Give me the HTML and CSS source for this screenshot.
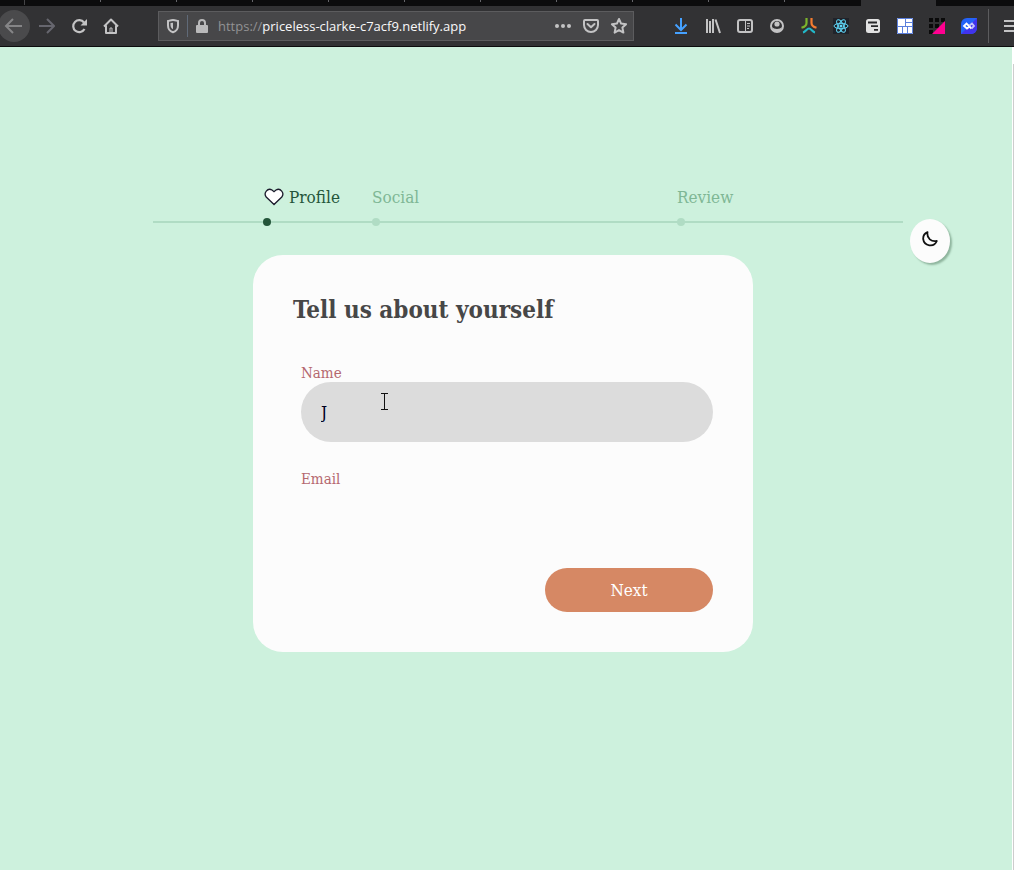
FILE: index.html
```html
<!DOCTYPE html>
<html lang="en">
<head>
<meta charset="utf-8">
<title>Tell us about yourself</title>
<link rel="stylesheet" href="styles.css">
</head>
<body>
<header class="browser">
  <div class="tabs">
    <span class="tab tab-first"></span><span class="tab"></span><span class="tab"></span><span class="tab"></span><span class="tab"></span><span class="tab"></span><span class="tab"></span><span class="tab"></span><span class="tab"></span><span class="tab"></span><span class="tab"></span><span class="tab tab-last"></span><span class="tab tab-active"></span>
  </div>
  <div class="toolbar">
    <div class="nav-buttons">
      <button class="tool back" aria-label="Back"><svg width="32" height="32" viewBox="0 0 32 32" fill="none" stroke="#858587" stroke-width="2"><path d="M24 16H9M15 9l-7 7 7 7"/></svg></button>
      <button class="tool" aria-label="Forward"><svg width="16" height="16" viewBox="0 0 16 16" fill="none" stroke="#66666e" stroke-width="2"><path d="M0 8h15M8 1l7 7-7 7"/></svg></button>
      <button class="tool" aria-label="Reload"><svg width="16" height="16" viewBox="0 0 16 16" fill="none" stroke="#c3c3c4" stroke-width="2.200"><path d="M13 4.500A6 6 0 1 0 13.500 11"/><path d="M16 1v6.500H9.500z" fill="#c3c3c4" stroke="none"/></svg></button>
      <button class="tool" aria-label="Home"><svg width="16" height="16" viewBox="0 0 16 16" fill="none" stroke="#c3c3c4" stroke-width="2" stroke-linejoin="round"><path d="M1 8.500l7-7 7 7M3 7.500V15h10V7.500"/><path d="M7 15v-5h2v5" stroke-width="1"/></svg></button>
    </div>
    <div class="url-bar">
      <svg width="14" height="16" viewBox="0 0 14 16" fill="none" stroke="#c3c3c4" stroke-width="2"><path d="M7 2C5.500 2 3.500 2.600 2 3v4.500c0 3.300 2 5.800 5 6.800 3-1 5-3.500 5-6.800V3C10.500 2.600 8.500 2 7 2z"/><path d="M7 4.800v6.500C5.300 10.300 4.500 9 4.500 7V5z" fill="#c3c3c4" stroke="none"/></svg>
      <span class="url-divider"></span>
      <svg class="lock" width="12" height="16" viewBox="0 0 12 16"><path d="M3 8V5a3 3 0 0 1 6 0v3" fill="none" stroke="#b9b9ba" stroke-width="2"/><rect y="7" width="12" height="8" rx="1" fill="#b9b9ba"/></svg>
      <p class="url"><span class="scheme">https://</span>priceless-clarke-c7acf9.netlify.app</p>
      <div class="url-actions">
        <svg width="18" height="16" viewBox="0 0 18 16" fill="#c3c3c4"><circle cx="3" cy="8" r="2"/><circle cx="9" cy="8" r="2"/><circle cx="15" cy="8" r="2"/></svg>
        <svg width="16" height="16" viewBox="0 0 16 16" fill="none" stroke="#c3c3c4" stroke-width="2" stroke-linejoin="round"><path d="M2 2h12a1 1 0 0 1 1 1v4a7 7 0 0 1-14 0V3a1 1 0 0 1 1-1z"/><path d="M4.500 6L8 9.300 11.500 6" stroke-linecap="round"/></svg>
        <svg width="18" height="18" viewBox="0 0 18 18" fill="none" stroke="#c3c3c4" stroke-width="2" stroke-linejoin="round"><path d="M9 2l2.100 4.600 5 .6-3.700 3.400 1 5L9 13.100l-4.400 2.500 1-5L1.900 7.200l5-.6z"/></svg>
      </div>
    </div>
    <div class="extensions">
      <button class="tool" aria-label="Downloads"><svg width="14" height="16" viewBox="0 0 14 16" fill="none" stroke="#45a1ff" stroke-width="2"><path d="M7 0v11M1.500 6.500L7 12l5.500-5.500M1 15h12"/></svg></button>
      <button class="tool" aria-label="Library"><svg width="16" height="16" viewBox="0 0 16 16" fill="none" stroke="#c3c3c4" stroke-width="2"><path d="M2 1v14M5 3v12M8 1v14M10.500 1.500l4.500 13.500"/></svg></button>
      <button class="tool" aria-label="Sidebar"><svg width="16" height="16" viewBox="0 0 16 16" fill="none" stroke="#c3c3c4" stroke-width="2"><rect x="1" y="2" width="14" height="12" rx="2"/><path d="M8.500 2v12M10 5.500h3M10 8h3M10 10.500h2" stroke-width="1"/></svg></button>
      <button class="tool" aria-label="Account"><svg width="16" height="16" viewBox="0 0 16 16"><circle cx="8" cy="8" r="6" fill="none" stroke="#c3c3c4" stroke-width="2"/><circle cx="8" cy="6" r="2.600" fill="#c3c3c4"/><path d="M3 9c2 2.500 8 2.500 10 0-.5 3-2.500 5-5 5S3.500 12 3 9z" fill="#c3c3c4"/></svg></button>
      <button class="tool" aria-label="Extension one"><svg width="16" height="16" viewBox="0 0 16 16" fill="none" stroke-width="2.200"><path d="M5.500 0v5c0 2-2 4-5 4.800" stroke="#7cb52c"/><path d="M10.500 0v5c0 2 2 4 5 4.800" stroke="#f47c30"/><path d="M2 14.500c2.500-.5 4-4 6-4s3.500 3.500 6 4" stroke="#22b8c8"/></svg></button>
      <button class="tool" aria-label="React developer tools"><svg width="16" height="16" viewBox="0 0 16 16"><path d="M0 0h16v16H0z" fill="#20232a"/><g fill="none" stroke="#61dafb"><ellipse cx="8" cy="8" rx="7" ry="2.700"/><ellipse cx="8" cy="8" rx="7" ry="2.700" transform="rotate(60 8 8)"/><ellipse cx="8" cy="8" rx="7" ry="2.700" transform="rotate(120 8 8)"/></g><circle cx="8" cy="8" r="1.500" fill="#61dafb"/></svg></button>
      <button class="tool" aria-label="Extension two"><svg width="16" height="16" viewBox="0 0 16 16"><rect x="1" y="1" width="14" height="14" rx="2.500" fill="#e2e2e2"/><path d="M3 4.500h9M6 8.200h7M9 11.800h4" stroke="#28282a" stroke-width="1.800" fill="none"/></svg></button>
      <button class="tool" aria-label="Extension three"><svg width="16" height="16" viewBox="0 0 16 16"><path d="M0 0h16v16H0z" fill="#fff"/><path d="M.5.5h15v15H.5zM8.500 0v8M8 4.500h8M0 8.500h16M5.500 8.500V16M10.500 8.500V16" fill="none" stroke="#5b7fdc"/></svg></button>
      <button class="tool" aria-label="Extension four"><svg width="16" height="16" viewBox="0 0 16 16"><path d="M0 0h4v4H0zM6 0h4v4H6zM12 0h4v4h-4zM0 6h4v4H0zM6 6h4v4H6zM0 12h4v4H0z" fill="#0a0a0a"/><path d="M16 3v13H3z" fill="#ff0090"/></svg></button>
      <button class="tool" aria-label="Extension five"><svg width="16" height="16" viewBox="0 0 16 16"><path d="M6 0h10v10a6 6 0 0 1-6 6H0V6a6 6 0 0 1 6-6z" fill="#2463f7"/><path d="M0 16L16 0v10a6 6 0 0 1-6 6z" fill="#4133ec"/><path d="M8 9l-2 1.500L3 8l2.500-2.500L10.500 10.500" fill="none" stroke="#fff" stroke-width="1.800"/><path d="M10.500 10.500L13 8l-2-2.500L8.500 7.500" fill="none" stroke="#c5c4fa" stroke-width="1.800"/></svg></button>
      <span class="tool-divider"></span>
      <button class="menu" aria-label="Menu"><svg width="16" height="14" viewBox="0 0 16 14" stroke="#c3c3c4" stroke-width="2"><path d="M0 2h16M0 7h16M0 12h16"/></svg></button>
    </div>
  </div>
</header>
<div class="viewport">
  <main class="page">
    <ol class="steps">
      <li class="step step-current"><span class="step-label"><svg width="20" height="18" viewBox="0 0 20 18"><path d="M10 16.500L2.200 9C-.8 5 3.500-.5 8 2L10 3.700 12 2C16.500-.5 20.800 5 17.800 9z" fill="#fff" stroke="#1b1b2c" stroke-width="1.300"/></svg>Profile</span><span class="dot"></span></li>
      <li class="step step-social"><span class="step-label">Social</span><span class="dot"></span></li>
      <li class="step"><span class="step-label">Review</span><span class="dot"></span></li>
    </ol>
    <form class="card">
      <h1 class="title">Tell us about yourself</h1>
      <div class="field">
        <label class="label" for="name">Name</label>
        <input class="input input-active" id="name" type="text" value="J">
        <svg class="pointer" width="9" height="17" viewBox="0 0 9 17" fill="none" stroke="#111"><path d="M1 .5h7M4.500 .5v16M1 16.500h7"/></svg>
      </div>
      <div class="field">
        <label class="label" for="email">Email</label>
        <input class="input" id="email" type="email">
      </div>
      <button class="next" type="button">Next</button>
    </form>
    <button class="theme" aria-label="Dark mode"><svg width="16" height="16" viewBox="0 0 16 16" fill="none" stroke="#111" stroke-width="1.800" stroke-linejoin="round"><path d="M5.500 1.200C2.500 2.500 1 5 1.200 8.200 2 15 12 17 14.800 10 9.500 11 4.500 7.500 5.500 1.200z"/></svg></button>
  </main>
  <div class="scrollbar"></div>
</div>
</body>
</html>
```
FILE: styles.css
```css
* { box-sizing: border-box; }
html, body { height: 100%; }
body {
  display: flex;
  flex-direction: column;
  margin: 0;
  overflow: hidden;
  font-family: "DejaVu Serif Condensed", "DejaVu Serif", serif;
  font-size: 17px;
}
button { border: 0; padding: 0; background: none; font: inherit; }
svg { display: block; flex: none; }

.browser { background: #323234; border-bottom: 1px solid #0c0c0d; }
.tabs { display: flex; height: 6px; background: #0c0c0d; }
.tab { width: 76px; height: 2px; border-right: 1px solid #66666a; }
.tab-first { width: 25px; height: 5px; border-color: #444446; }
.tab-last { border: 0; }
.tab-active { width: 75px; height: 6px; border: 0; background: #323234; }
.toolbar { display: flex; align-items: center; height: 40px; }
.nav-buttons { display: flex; margin-left: -2px; }
.tool { display: grid; place-items: center; width: 32px; height: 32px; }
.back { margin-right: 1px; border-radius: 50%; background: #4a4a4c; }
.url-bar {
  display: flex;
  flex: 1;
  align-items: center;
  height: 30px;
  margin: 0 31px;
  padding: 0 5px 0 7px;
  border: 1px solid #5c5c5e;
  background: #474749;
}
.url-divider { width: 1px; height: 22px; margin: 0 8px 0 7px; background: #606a78; }
.lock { margin-right: 10px; }
.url { flex: 1; margin: 0; font: 13px/20px "Open Sans", "Noto Sans", sans-serif; color: #f9f9fa; white-space: nowrap; }
.scheme { color: #929294; }
.url-actions { display: flex; align-items: center; gap: 11px; }
.extensions { display: flex; align-items: center; }
.tool-divider { width: 1px; height: 34px; margin: 0 15px 0 3px; background: #5c5c5e; }
.menu { width: 10px; overflow: hidden; }

.viewport { display: flex; flex: 1; }
.page {
  display: flex;
  flex: 1;
  flex-direction: column;
  align-items: center;
  padding: 138px 6px 0 0;
  background: #cdf1dd;
}
.scrollbar { width: 2px; border-top: 17px solid #fff; border-left: 1px solid #fff; background: #cdcdcd; }

.steps {
  display: flex;
  align-items: flex-end;
  width: 100%;
  max-width: 750px;
  height: 38px;
  margin: 0 0 32px 50px;
  padding: 0 0 0 110px;
  border-bottom: 2px solid #b0dcc4;
  list-style: none;
  color: #7fb795;
}
.step { display: flex; flex-direction: column; gap: 9px; margin-bottom: -5px; }
.step-label { display: flex; gap: 5px; line-height: 24px; align-items: center; }
.step-current { width: 109px; color: #24553a; }
.step-current .step-label { padding-left: 1px; }
.step-social { width: 305px; }
.dot { width: 8px; height: 8px; border-radius: 50%; background: #b0dcc4; }
.step-current .dot { background: #24553a; }

.card {
  display: flex;
  flex-direction: column;
  width: 100%;
  max-width: 500px;
  padding: 40px;
  border-radius: 30px;
  background: #fcfcfc;
}
.title { margin: 0 0 39px; font-size: 24px; line-height: 30px; font-weight: 700; color: #474747; }
.field { position: relative; display: flex; flex-direction: column; margin: 0 0 28px 8px; }
.label { font-size: 15px; line-height: 18px; color: #b5686f; }
.input {
  width: 100%;
  height: 60px;
  padding: 0 20px;
  border: 0;
  border-radius: 30px;
  outline: 0;
  background: transparent;
  font: inherit;
  color: #00001c;
}
.input-active { background: #dcdcdc; }
.pointer { position: absolute; left: 79px; top: 29px; }
.next {
  align-self: flex-end;
  width: 168px;
  height: 44px;
  margin-top: -8px;
  border-radius: 22px;
  background: #d68864;
  color: #fff;
}
.theme {
  position: absolute;
  top: 219px;
  right: 64px;
  display: grid;
  place-items: center;
  width: 40px;
  height: 44px;
  padding-bottom: 4px;
  border-radius: 50%;
  background: #fcfcfc;
  box-shadow: 2px 2px 2px #8fb59e;
}
```
